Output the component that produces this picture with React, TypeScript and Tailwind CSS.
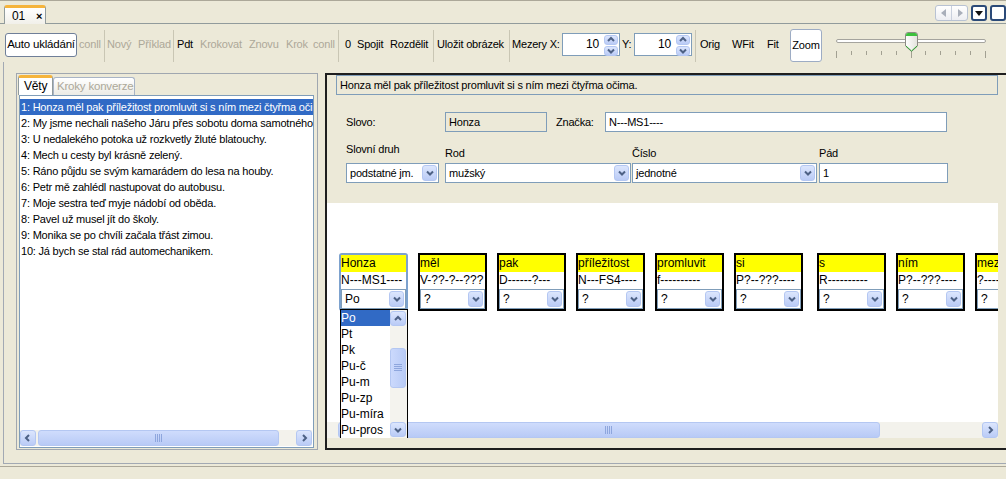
import React from 'react';

const sentences = [
  '1: Honza měl pak příležitost promluvit si s ním mezi čtyřma očima.',
  '2: My jsme nechali našeho Járu přes sobotu doma samotného.',
  '3: U nedalekého potoka už rozkvetly žluté blatouchy.',
  '4: Mech u cesty byl krásně zelený.',
  '5: Ráno půjdu se svým kamarádem do lesa na houby.',
  '6: Petr mě zahlédl nastupovat do autobusu.',
  '7: Moje sestra teď myje nádobí od oběda.',
  '8: Pavel už musel jít do školy.',
  '9: Monika se po chvíli začala třást zimou.',
  '10: Já bych se stal rád automechanikem.',
];

type Word = { w: string; tag: string; val: string; ml: string };

const words: Word[] = [
  { w: 'Honza', tag: 'N---MS1----', val: 'Po', ml: 'ml-0' },
  { w: 'měl', tag: 'V-??-?--???', val: '?', ml: 'ml-[10px]' },
  { w: 'pak', tag: 'D------?---', val: '?', ml: 'ml-[10px]' },
  { w: 'příležitost', tag: 'N---FS4----', val: '?', ml: 'ml-[10px]' },
  { w: 'promluvit', tag: 'f----------', val: '?', ml: 'ml-[10px]' },
  { w: 'si', tag: 'P?--???----', val: '?', ml: 'ml-[10px]' },
  { w: 's', tag: 'R----------', val: '?', ml: 'ml-[14px]' },
  { w: 'ním', tag: 'P?--???----', val: '?', ml: 'ml-[10px]' },
  { w: 'mezi', tag: '?----------', val: '?', ml: 'ml-[10px]' },
];

const options = ['Po', 'Pt', 'Pk', 'Pu-č', 'Pu-m', 'Pu-zp', 'Pu-míra', 'Pu-pros'];

function Chevron({ dir }: { dir: 'l' | 'r' | 'u' | 'd' }) {
  const d = {
    l: 'M5 1L2 4l3 3',
    r: 'M3 1l3 3-3 3',
    u: 'M1 5l3-3 3 3',
    d: 'M1 2.5l3 3 3-3',
  }[dir];
  return (
    <svg width="8" height="8" viewBox="0 0 8 8">
      <path d={d} fill="none" stroke="#4D6185" strokeWidth="2" />
    </svg>
  );
}

function SBtn({ dir, cls }: { dir: 'l' | 'r' | 'u' | 'd'; cls: string }) {
  return (
    <div
      className={`${cls} shrink-0 rounded-[3px] border border-[#B4C7F2] bg-linear-to-b from-[#DCE6FD] to-[#BACBF6] flex items-center justify-center`}
    >
      <Chevron dir={dir} />
    </div>
  );
}

function Grip({ vertical }: { vertical?: boolean }) {
  return vertical ? (
    <svg width="8" height="8" viewBox="0 0 8 8">
      {[0, 2, 4, 6].map((y) => (
        <rect key={y} x="0" y={y} width="8" height="1" fill="#8EA6DD" />
      ))}
    </svg>
  ) : (
    <svg width="8" height="8" viewBox="0 0 8 8">
      {[0, 2, 4, 6].map((x) => (
        <rect key={x} x={x} y="0" width="1" height="8" fill="#8EA6DD" />
      ))}
    </svg>
  );
}

function Combo({ text, cls }: { text: string; cls: string }) {
  return (
    <div className={`${cls} shrink-0 bg-white border border-[#7F9DB9] flex`}>
      <span className="flex-1 pl-[3px] whitespace-nowrap overflow-hidden leading-[18px]">{text}</span>
      <div className="p-px flex">
        <SBtn dir="d" cls="w-[15px]" />
      </div>
    </div>
  );
}

function Spin() {
  return (
    <div className="w-[58px] h-[23px] shrink-0 bg-white border border-[#7F9DB9] flex">
      <span className="flex-1 text-right pr-[4px] leading-[21px] text-[12px]">10</span>
      <div className="w-[16px] flex flex-col gap-px p-px">
        <SBtn dir="u" cls="flex-1" />
        <SBtn dir="d" cls="flex-1" />
      </div>
    </div>
  );
}

function Sep() {
  return <div className="w-px shrink-0 self-stretch mt-[3px] bg-[#C9C6B4]" />;
}

function T({ w, pl, dim, children }: { w: string; pl: string; dim?: boolean; children: React.ReactNode }) {
  return (
    <span className={`${w} ${pl} shrink-0 whitespace-nowrap ${dim ? 'text-[#ACA899]' : 'text-black'}`}>
      {children}
    </span>
  );
}

function Card({ word, open }: { word: Word; open?: boolean }) {
  return (
    <div
      className={`${word.ml} relative shrink-0 w-[69px] h-[58px] border-2 flex flex-col ${
        open ? 'border-[#7DA2CE] rounded-[3px]' : 'border-black'
      }`}
    >
      <div className="h-[17px] bg-[#FFFF00] leading-[17px] whitespace-nowrap overflow-hidden">{word.w}</div>
      <div className="h-[17px] bg-white leading-[17px] whitespace-nowrap overflow-hidden">{word.tag}</div>
      <Combo text={word.val} cls="h-[20px] w-full" />
      {open && (
        <div className="absolute z-10 top-[54px] left-[-1px] w-[68px] h-[130px] border border-black bg-white flex">
          <div className="flex-1 flex flex-col">
            {options.map((o, i) => (
              <div
                key={o}
                className={`h-[16px] leading-[16px] whitespace-nowrap ${i === 0 ? 'bg-[#316AC5] text-white' : ''}`}
              >
                {o}
              </div>
            ))}
          </div>
          <div className="w-[17px] flex flex-col bg-[#F4F3EE] py-px pr-px">
            <SBtn dir="u" cls="h-[15px]" />
            <div className="mt-[22px] h-[40px] rounded-[3px] border border-[#B4C7F2] bg-linear-to-r from-[#CBD9FC] to-[#B9CBF6] flex items-center justify-center">
              <Grip vertical />
            </div>
            <div className="flex-1" />
            <SBtn dir="d" cls="h-[15px]" />
          </div>
        </div>
      )}
    </div>
  );
}

export default function App() {
  return (
    <div className="w-[1006px] h-[479px] bg-[#ECE9D8] overflow-hidden flex flex-col font-['Liberation_Sans',Arial,sans-serif] text-[11px] tracking-[-0.2px] text-black">
      {/* document tabs */}
      <div className="h-[24px] shrink-0 border-t border-t-[#ACA899] border-b border-b-[#919B9C] flex items-end pl-[4px]">
        <div className="relative z-10 mb-[-1px] w-[42px] h-[19px] rounded-t-[3px] border-t-[3px] border-t-[#F5B43C] border-x border-x-[#919B9C] bg-linear-to-b from-white to-[#F1F0EA] flex items-center pl-[7px]">
          <span className="text-[12px]">01</span>
          <span className="ml-[11px] font-bold text-[11px]">×</span>
        </div>
        <div className="ml-auto self-start mt-[4px] flex">
          <div className="w-[33px] h-[16px] rounded-[3px] border border-[#B8C2D3] bg-linear-to-b from-white to-[#EDEEF2] flex">
            <div className="flex-1 flex items-center justify-center border-r border-[#C9D0DD]">
              <svg width="6" height="8" viewBox="0 0 6 8">
                <path d="M5 0v8L0 4z" fill="#A9AFBA" />
              </svg>
            </div>
            <div className="flex-1 flex items-center justify-center">
              <svg width="6" height="8" viewBox="0 0 6 8">
                <path d="M1 0v8l5-4z" fill="#A9AFBA" />
              </svg>
            </div>
          </div>
          <div className="ml-[3px] w-[16px] h-[16px] rounded-[3px] border-2 border-[#2B4A78] bg-white flex items-center justify-center">
            <svg width="8" height="5" viewBox="0 0 8 5">
              <path d="M0 0h8L4 5z" fill="#111" />
            </svg>
          </div>
          <div className="ml-[3px] w-[16px] h-[16px] rounded-[3px] border-2 border-[#2B4A78] bg-white" />
        </div>
      </div>

      {/* toolbar */}
      <div className="h-[38px] shrink-0 flex items-center pt-[3px] pl-[5px]">
        <div className="w-[72px] h-[24px] shrink-0 rounded-[3px] border border-[#6F7F99] bg-white flex items-center justify-center whitespace-nowrap text-[11.5px]">
          Auto ukládání
        </div>
        <T w="w-[27px]" pl="pl-[2px]" dim>conll</T>
        <Sep />
        <T w="w-[31px]" pl="pl-[2px]" dim>Nový</T>
        <T w="w-[37px]" pl="pl-[2px]" dim>Příklad</T>
        <Sep />
        <T w="w-[24px]" pl="pl-[3px]">Pdt</T>
        <T w="w-[49px]" pl="pl-[2px]" dim>Krokovat</T>
        <T w="w-[37px]" pl="pl-[2px]" dim>Znovu</T>
        <T w="w-[27px]" pl="pl-[2px]" dim>Krok</T>
        <T w="w-[27px]" pl="pl-[2px]" dim>conll</T>
        <Sep />
        <T w="w-[16px]" pl="pl-[6px]">0</T>
        <T w="w-[33px]" pl="pl-[2px]">Spojit</T>
        <T w="w-[45px]" pl="pl-[2px]">Rozdělit</T>
        <Sep />
        <T w="w-[75px]" pl="pl-[3px]">Uložit obrázek</T>
        <Sep />
        <T w="w-[52px]" pl="pl-[2px]">Mezery X:</T>
        <Spin />
        <T w="w-[14px]" pl="pl-[2px]">Y:</T>
        <Spin />
        <div className="w-[3px] shrink-0" />
        <Sep />
        <T w="w-[32px]" pl="pl-[4px]">Orig</T>
        <T w="w-[35px]" pl="pl-[4px]">WFit</T>
        <T w="w-[27px]" pl="pl-[4px]">Fit</T>
        <div className="w-[32px] h-[33px] self-end shrink-0 rounded-[3px] border border-[#9DACC4] bg-white flex items-center justify-center">
          Zoom
        </div>
        {/* zoom slider */}
        <div className="relative ml-[14px] w-[152px] self-stretch shrink-0">
          <div className="absolute left-0 top-[12px] w-[150px] h-[4px] rounded-[2px] border border-[#A5A49E] bg-white" />
          {Array.from({ length: 11 }).map((_, i) => (
            <div
              key={i}
              className={`absolute top-[24px] w-px bg-[#A2A092] ${i === 0 || i === 5 || i === 10 ? 'h-[7px]' : 'h-[4px]'}`}
              style={{ left: Math.round(i * 14.9) }}
            />
          ))}
          <svg className="absolute left-[69px] top-[5px]" width="13" height="20" viewBox="0 0 13 20">
            <defs>
              <linearGradient id="tb" x1="0" x2="1">
                <stop offset="0" stopColor="#FFFFFF" />
                <stop offset="1" stopColor="#E3E2DC" />
              </linearGradient>
            </defs>
            <path d="M0.5 3Q0.5 0.5 3 0.5H10Q12.5 0.5 12.5 3V14L6.5 19.5L0.5 14Z" fill="url(#tb)" stroke="#8C8B84" />
            <path d="M1 3Q1 1 3 1H10Q12 1 12 3V4H1Z" fill="#3CC13C" />
            <path d="M1 14L6.5 19M12 14L6.5 19" stroke="#2DA62D" strokeWidth="1" />
          </svg>
        </div>
      </div>

      {/* main split frame */}
      <div className="ml-[3px] h-[402px] shrink-0 border-l border-b border-[#A2A9B3] flex pt-[11px] overflow-hidden">
        {/* left: sentences */}
        <div className="ml-[12px] w-[302px] h-[377px] shrink-0 border border-[#A0A7B0] flex flex-col pl-[2px] pr-[3px] pt-px pb-px">
          <div className="h-[20px] flex items-end ml-[-1px]">
            <div className="w-[35px] h-[20px] shrink-0 rounded-t-[3px] border-t-[3px] border-t-[#F5B43C] border-x border-x-[#919B9C] bg-white pl-[5px] leading-[16px] text-[12px] whitespace-nowrap">
              Věty
            </div>
            <div className="w-[82px] h-[18px] shrink-0 rounded-t-[3px] border border-b-0 border-[#A8B4C6] bg-linear-to-b from-white to-[#ECEBE5] pl-[3px] leading-[17px] text-[#ACA899] text-[11.5px] whitespace-nowrap overflow-hidden">
              Kroky konverze
            </div>
          </div>
          <div className="flex-1 border border-[#7F9DB9] bg-white flex flex-col overflow-hidden">
            <div className="pt-[3px] flex flex-col">
              {sentences.map((s, i) => (
                <div
                  key={i}
                  className={`h-[16px] leading-[16px] pl-px whitespace-nowrap overflow-hidden ${
                    i === 0 ? 'bg-[#316AC5] text-white' : ''
                  }`}
                >
                  {s}
                </div>
              ))}
            </div>
            <div className="mt-auto mb-px mr-px h-[16px] flex bg-[#F3F2EC]">
              <SBtn dir="l" cls="w-[16px] h-[16px]" />
              <div className="ml-[2px] w-[241px] h-[16px] rounded-[3px] border border-[#B4C7F2] bg-linear-to-b from-[#CFDCFC] to-[#B8CAF6] flex items-center justify-center">
                <Grip />
              </div>
              <div className="flex-1" />
              <SBtn dir="r" cls="w-[16px] h-[16px]" />
            </div>
          </div>
        </div>

        {/* right: word editor */}
        <div className="ml-[7px] w-[700px] h-[377px] shrink-0 border-2 border-r-0 border-[#1E1E1E] flex flex-col">
          <div className="ml-[9px] w-[662px] h-[20px] shrink-0 border border-[#7F9DB9] pl-[3px] leading-[18px] whitespace-nowrap">
            Honza měl pak příležitost promluvit si s ním mezi čtyřma očima.
          </div>

          <div className="mt-[17px] h-[20px] shrink-0 flex items-center">
            <span className="ml-[19px] w-[99px] shrink-0">Slovo:</span>
            <div className="w-[102px] h-[20px] shrink-0 border border-[#7F9DB9] pl-[3px] leading-[18px]">Honza</div>
            <span className="ml-[9px] w-[49px] shrink-0">Značka:</span>
            <div className="w-[342px] h-[20px] shrink-0 border border-[#7F9DB9] bg-white pl-[3px] leading-[18px]">
              N---MS1----
            </div>
          </div>

          <div className="h-[31px] shrink-0 flex">
            <div className="ml-[19px] w-[93px] shrink-0 flex flex-col justify-end">
              <span className="mb-[7px] leading-[14px]">Slovní druh</span>
            </div>
            <div className="ml-[6px] w-[186px] shrink-0 flex flex-col justify-end">
              <span className="mb-[3px] leading-[14px]">Rod</span>
            </div>
            <div className="ml-[1px] w-[185px] shrink-0 flex flex-col justify-end">
              <span className="mb-[3px] leading-[14px]">Číslo</span>
            </div>
            <div className="ml-[2px] w-[129px] shrink-0 flex flex-col justify-end">
              <span className="mb-[3px] leading-[14px]">Pád</span>
            </div>
          </div>
          <div className="h-[20px] shrink-0 flex">
            <Combo text="podstatné jm." cls="ml-[19px] w-[93px] h-[20px]" />
            <Combo text="mužský" cls="ml-[6px] w-[186px] h-[20px]" />
            <Combo text="jednotné" cls="ml-[1px] w-[185px] h-[20px]" />
            <div className="ml-[2px] w-[129px] h-[20px] shrink-0 border border-[#7F9DB9] bg-white pl-[3px] leading-[18px]">
              1
            </div>
          </div>

          {/* word canvas */}
          <div className="mt-[20px] w-[671px] h-[235px] shrink-0 bg-white flex flex-col overflow-hidden">
            <div className="flex-1 flex items-start pt-[50px] pl-[12px] text-[12px] tracking-normal">
              {words.map((w, i) => (
                <Card key={w.w} word={w} open={i === 0} />
              ))}
            </div>
            <div className="h-[16px] shrink-0 flex bg-[#F3F2EC]">
              <div className="ml-[11px] w-[542px] h-[16px] rounded-[3px] border border-[#B4C7F2] bg-linear-to-b from-[#CFDCFC] to-[#B8CAF6] flex items-center justify-center">
                <Grip />
              </div>
              <div className="flex-1" />
              <SBtn dir="r" cls="w-[16px] h-[16px]" />
            </div>
          </div>
        </div>
      </div>

      {/* status bar */}
      <div className="mt-[2px] flex-1 border-t border-[#ACA899]" />
    </div>
  );
}
